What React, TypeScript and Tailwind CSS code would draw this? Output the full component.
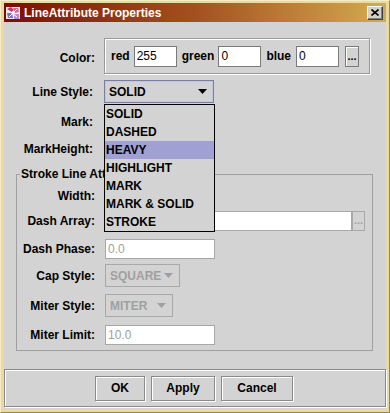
import React from "react";

const labelCls = "text-right font-bold text-[12px] leading-none text-black whitespace-nowrap";

const lineStyles = ["SOLID", "DASHED", "HEAVY", "HIGHLIGHT", "MARK", "MARK & SOLID", "STROKE"];

function Arrow({ color }: { color: string }) {
    return (
        <svg width="9" height="5" viewBox="0 0 9 5">
            <polygon points="0,0 9,0 4.5,5" fill={color} />
        </svg>
    );
}

function Field({ value, disabled, className = "" }: { value: string; disabled?: boolean; className?: string }) {
    return (
        <div
            className={`bg-white border flex items-center pl-[2px] text-[12px] leading-none ${
                disabled ? "border-[#a8a8a8] text-[#a0a0a0]" : "border-[#7a7a7a] text-black"
            } ${className}`}
        >
            {value}
        </div>
    );
}

function Combo({ value, width, disabled }: { value: string; width: string; disabled?: boolean }) {
    return (
        <div
            className={`${width} h-[23px] border flex items-center justify-between pl-[4px] pr-[6px] font-bold text-[12px] leading-none ${
                disabled
                    ? "border-[#a8a8a8] text-[#a0a0a0]"
                    : "border-[#7c7c9c] shadow-[inset_1px_1px_0_#c4c4e4,inset_-1px_-1px_0_#c4c4e4] text-black"
            }`}
        >
            <span>{value}</span>
            <Arrow color={disabled ? "#a0a0a0" : "#000"} />
        </div>
    );
}

function DotsButton({ disabled, className = "" }: { disabled?: boolean; className?: string }) {
    return (
        <div
            className={`flex items-end justify-center pb-[4px] border font-bold text-[11px] leading-none ${
                disabled
                    ? "border-[#a8a8a8] text-[#a0a0a0]"
                    : "border-[#7a7a7a] shadow-[inset_1px_1px_0_#fff] text-black"
            } ${className}`}
        >
            ...
        </div>
    );
}

function Button({ label, width }: { label: string; width: string }) {
    return (
        <div
            className={`${width} h-[25px] flex items-center justify-center border border-[#8a8a8a] shadow-[inset_1px_1px_0_#fff,1px_1px_0_#fff] font-bold text-[12px] text-black`}
        >
            {label}
        </div>
    );
}

function AppIcon() {
    return (
        <svg width="16" height="16" viewBox="0 0 16 16">
            <rect x="1" y="2" width="14" height="12" fill="#f4e8f4" />
            <path d="M2 4 L6 2 L9 5 L6 7 Z" fill="#d0306a" />
            <path d="M8 3 L13 3 L14 7 L10 8 Z" fill="#e06090" />
            <path d="M2 8 L7 8 L8 13 L3 13 Z" fill="#8070c0" />
            <path d="M9 9 L14 9 L14 14 L9 14 Z" fill="#b090d0" />
            <path d="M3 5 L12 12 M12 4 L4 12" stroke="#ffffff" strokeWidth="1" />
        </svg>
    );
}

export default function App() {
    return (
        <div className="w-[390px] h-[413px] flex flex-col bg-[#e9d9a3] border-l border-t border-l-[#f6ecc8] border-t-[#f6ecc8] border-r border-b border-r-[#9c8448] border-b-[#9c8448] pt-[2px] px-[3px] pb-[3px] font-['Liberation_Sans',Arial,sans-serif] select-none">
            {/* title bar */}
            <div className="h-[19px] flex items-center pl-[1px] pr-[3px] bg-gradient-to-r from-[#7c0800] via-[#a4501e] to-[#d2ac50]">
                <AppIcon />
                <span className="ml-[3px] text-white font-bold text-[12px] leading-none">LineAttribute Properties</span>
                <div className="ml-auto w-[16px] h-[14px] bg-[#d4d0c8] border border-t-white border-l-white border-r-[#404040] border-b-[#404040] shadow-[inset_-1px_-1px_0_#808080] flex items-center justify-center">
                    <svg width="8" height="7" viewBox="0 0 8 7">
                        <path d="M0.5 0.5 L7.5 6.5 M7.5 0.5 L0.5 6.5" stroke="#000" strokeWidth="1.6" />
                    </svg>
                </div>
            </div>

            {/* content */}
            <div className="flex-1 flex flex-col bg-[#d3d3d3] pt-[16px] pb-[2px]">
                {/* Color */}
                <div className="flex items-center h-[36px]">
                    <div className={`${labelCls} w-[91px] pt-[3px]`}>Color:</div>
                    <div className="ml-[9px] w-[266px] h-[36px] border border-[#9a9a9a] shadow-[inset_1px_1px_0_#fff,1px_1px_0_#fff] flex items-center pl-[6px] gap-[4px]">
                        <span className="font-bold text-[12px]">red</span>
                        <Field value="255" className="w-[43px] h-[21px]" />
                        <span className="ml-[1px] font-bold text-[12px]">green</span>
                        <Field value="0" className="w-[43px] h-[21px]" />
                        <span className="ml-[1px] font-bold text-[12px]">blue</span>
                        <Field value="0" className="ml-[1px] w-[43px] h-[21px]" />
                        <DotsButton className="ml-[2px] w-[14px] h-[21px]" />
                    </div>
                </div>

                {/* Line Style */}
                <div className="flex items-center h-[23px] mt-[6px]">
                    <div className={`${labelCls} w-[89px] pt-[1px]`}>Line Style:</div>
                    <div className="ml-[11px] relative">
                        <Combo value="SOLID" width="w-[110px]" />
                        <div className="absolute z-10 left-0 top-[24px] w-[111px] border border-black bg-[#d3d3d3]">
                            {lineStyles.map((s) => (
                                <div
                                    key={s}
                                    className={`h-[18px] flex items-center pl-[1px] font-bold text-[12px] leading-none text-black ${
                                        s === "HEAVY" ? "bg-[#a0a0d2]" : ""
                                    }`}
                                >
                                    {s}
                                </div>
                            ))}
                        </div>
                    </div>
                </div>

                {/* Mark */}
                <div className="flex items-center h-[27px] mt-[5px]">
                    <div className={`${labelCls} w-[89px]`}>Mark:</div>
                </div>
                <div className="flex items-center h-[27px]">
                    <div className={`${labelCls} w-[89px]`}>MarkHeight:</div>
                </div>

                {/* Stroke group */}
                <fieldset className="mt-[5px] ml-[12px] mr-[13px] border border-[#a0a0a0] pl-[3px] pb-[5px] pt-[3px]">
                    <legend className="max-w-[84px] overflow-hidden whitespace-nowrap font-bold text-[12px] leading-[14px] px-[1px] text-black">
                        Stroke Line Attributes
                    </legend>
                    <div className="flex items-center h-[24px]">
                        <div className={`${labelCls} w-[75px]`}>Width:</div>
                    </div>
                    <div className="flex items-center h-[20px] mt-[3px]">
                        <div className={`${labelCls} w-[75px]`}>Dash Array:</div>
                        <Field value="" className="ml-[10px] w-[247px] h-[20px]" disabled />
                        <DotsButton disabled className="w-[13px] h-[20px]" />
                    </div>
                    <div className="flex items-center h-[20px] mt-[8px]">
                        <div className={`${labelCls} w-[75px]`}>Dash Phase:</div>
                        <Field value="0.0" className="ml-[10px] w-[110px] h-[20px]" disabled />
                    </div>
                    <div className="flex items-center h-[23px] mt-[5px]">
                        <div className={`${labelCls} w-[75px]`}>Cap Style:</div>
                        <div className="ml-[10px]">
                            <Combo value="SQUARE" width="w-[75px]" disabled />
                        </div>
                    </div>
                    <div className="flex items-center h-[23px] mt-[7px]">
                        <div className={`${labelCls} w-[75px]`}>Miter Style:</div>
                        <div className="ml-[10px]">
                            <Combo value="MITER" width="w-[68px]" disabled />
                        </div>
                    </div>
                    <div className="flex items-center h-[20px] mt-[8px]">
                        <div className={`${labelCls} w-[75px]`}>Miter Limit:</div>
                        <Field value="10.0" className="ml-[10px] w-[110px] h-[20px]" disabled />
                    </div>
                </fieldset>

                {/* buttons */}
                <div className="mt-auto h-[38px] border border-[#8a8a8a] shadow-[inset_1px_1px_0_#fff,1px_1px_0_#fff] flex items-center justify-center gap-[6px] pr-[2px]">
                    <Button label="OK" width="w-[50px]" />
                    <Button label="Apply" width="w-[64px]" />
                    <Button label="Cancel" width="w-[72px]" />
                </div>
            </div>
        </div>
    );
}
